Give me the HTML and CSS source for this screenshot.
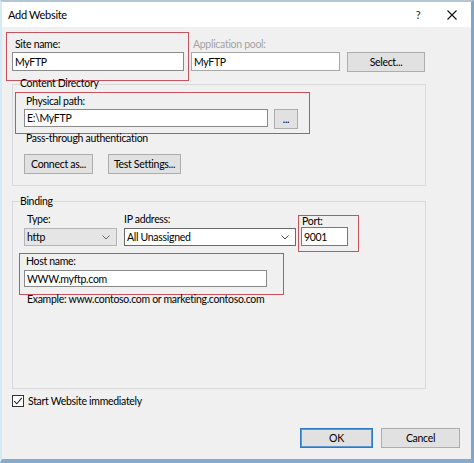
FILE: index.html
```html
<!DOCTYPE html>
<html>
<head>
<meta charset="utf-8">
<link rel="stylesheet" href="styles.css">
</head>
<body>
<div class="window">
  <div class="titlebar">
    <span class="title">Add Website</span>
    <span class="help">?</span>
    <svg class="close" width="10" height="10" viewBox="0 0 10 10"><path d="M0.5 0.5 L9.5 9.5 M9.5 0.5 L0.5 9.5" stroke="#111" stroke-width="1.1" fill="none"/></svg>
  </div>
  <div class="content">
    <div class="row-top">
      <div class="annot site-box">
        <div class="lbl">Site name:</div>
        <div class="field site-field">MyFTP</div>
      </div>
      <div class="pool-col">
        <div class="lbl disabled">Application pool:</div>
        <div class="field pool-field">MyFTP</div>
      </div>
      <div class="btn select-btn">Select...</div>
    </div>

    <div class="group content-group">
      <div class="legend">Content Directory</div>
      <div class="annot path-box">
        <div class="lbl">Physical path:</div>
        <div class="path-row">
          <div class="field path-field">E:\MyFTP</div>
          <div class="btn dots-btn">...</div>
        </div>
      </div>
      <div class="pass-lbl">Pass-through authentication</div>
      <div class="btn-row">
        <div class="btn connect-btn">Connect as...</div>
        <div class="btn test-btn">Test Settings...</div>
      </div>
    </div>

    <div class="group binding-group">
      <div class="legend">Binding</div>
      <div class="bind-row">
        <div class="type-col">
          <div class="lbl type-lbl">Type:</div>
          <div class="combo type-combo"><span>http</span><svg width="8" height="5" viewBox="0 0 8 5"><path d="M0.5 0.5 L4 4 L7.5 0.5" stroke="#666" fill="none"/></svg></div>
        </div>
        <div class="ip-col">
          <div class="lbl">IP address:</div>
          <div class="combo ip-combo"><span>All Unassigned</span><svg width="8" height="5" viewBox="0 0 8 5"><path d="M0.5 0.5 L4 4 L7.5 0.5" stroke="#444" fill="none"/></svg></div>
        </div>
        <div class="annot port-box">
          <div class="lbl port-lbl">Port:</div>
          <div class="field port-field">9001</div>
        </div>
      </div>
      <div class="annot host-box">
        <div class="lbl host-lbl">Host name:</div>
        <div class="field host-field">WWW.myftp.com</div>
      </div>
      <div class="example">Example: www.contoso.com or marketing.contoso.com</div>
    </div>

    <div class="check-row">
      <span class="checkbox"><svg width="10" height="10" viewBox="0 0 10 10"><path d="M1.2 5.2 L3.8 7.8 L8.8 1.8" stroke="#222" stroke-width="1.1" fill="none"/></svg></span>
      <span class="check-lbl">Start Website immediately</span>
    </div>

    <div class="footer">
      <div class="btn ok-btn">OK</div>
      <div class="btn cancel-btn">Cancel</div>
    </div>
  </div>
</div>
</body>
</html>
```
FILE: styles.css
```css
* { box-sizing: border-box; }
html, body { margin: 0; padding: 0; background: #f0f0f0; }
body {
  font-family: "Lato", "Liberation Sans", sans-serif;
  font-size: 10.5px;
  letter-spacing: -0.3px;
  color: #000;
}
.window {
  width: 474px;
  height: 463px;
  background: #f0f0f0;
  border-top: 2px solid #b4c6d6;
  border-left: 2px solid #d3ebf7;
  border-right: 3px solid #7ea6ca;
  border-bottom: 4px solid #86abcd;
  overflow: hidden;
}
.titlebar {
  height: 25px;
  background: #ffffff;
  display: flex;
  align-items: center;
}
.title { flex: 1; padding-left: 6px; font-size: 11px; color: #000; }
.help { width: 12px; text-align: center; margin-right: 23px; font-size: 11px; color: #222; }
.close { display: block; margin-right: 14px; }

.content { padding-top: 5px; }
.lbl { line-height: 16px; white-space: nowrap; }
.disabled { color: #a3a3a3; }
.annot { border: 1px solid #c6525e; }
.field {
  background: #fff;
  border: 1px solid #8a8a8a;
  padding-left: 2px;
  display: flex;
  align-items: center;
  white-space: nowrap;
}
.btn {
  background: #e1e1e1;
  border: 1px solid #adadad;
  display: flex;
  align-items: center;
  justify-content: center;
  white-space: nowrap;
}

.row-top { display: flex; align-items: flex-start; }
.site-box { margin-left: 4px; width: 183px; height: 49px; padding: 3px 0 0 5px; }
.site-box .lbl { padding-left: 3px; }
.site-field { width: 172px; height: 19px; }
.pool-col { margin-left: 2px; padding-top: 4px; }
.pool-col .lbl { padding-left: 2px; }
.pool-field { width: 149px; height: 19px; border-color: #a8a8a8; }
.select-btn { margin-left: 7px; margin-top: 20px; width: 78px; height: 20px; }

.group { border: 1px solid #d9d9d9; margin-left: 10px; width: 414px; }
.legend {
  width: fit-content;
  background: #f0f0f0;
  line-height: 14px;
  margin-left: 7px;
}
.content-group { margin-top: 3px; height: 102px; }
.content-group .legend { margin-top: -9px; }
.path-box { margin: 2px 0 0 2px; width: 295px; height: 42px; padding-left: 8px; }
.path-box .lbl { padding-left: 2px; }
.path-row { display: flex; align-items: flex-start; }
.path-field { width: 244px; height: 18px; }
.dots-btn { margin-left: 6px; width: 24px; height: 20px; }
.pass-lbl { line-height: 14px; margin: -3px 0 0 13px; }
.btn-row { display: flex; margin: 9px 0 0 11px; gap: 15px; }
.connect-btn { width: 69px; height: 20px; }
.test-btn { width: 73px; height: 20px; }

.binding-group { margin-top: 15px; height: 188px; }
.binding-group .legend { margin-top: -8px; }
.bind-row { display: flex; align-items: flex-start; margin-top: 3px; }
.type-col { margin-left: 11px; }
.type-lbl { padding-left: 3px; }
.combo {
  margin-top: 1px;
  height: 18px;
  display: flex;
  align-items: center;
  justify-content: space-between;
  padding: 0 6px 0 2px;
  white-space: nowrap;
}
.combo svg { display: block; }
.type-combo { width: 93px; background: #e5e5e5; border: 1px solid #b4b4b4; }
.ip-col { margin-left: 7px; }
.ip-combo { width: 172px; background: #fff; border: 1px solid #6a6a6a; }
.port-box { margin: 4px 0 0 2px; width: 61px; height: 37px; padding-left: 2px; }
.port-lbl { line-height: 11px; padding-left: 1px; }
.port-field { width: 47px; height: 19px; border-color: #3e86c8; }
.host-box { margin: 1px 0 0 6px; width: 265px; height: 42px; padding-left: 4px; }
.host-lbl { line-height: 14px; padding-left: 2px; }
.host-field { margin-top: 2px; width: 243px; height: 17px; }
.example { line-height: 14px; margin: -3px 0 0 14px; white-space: nowrap; }

.check-row { display: flex; align-items: center; margin: 5px 0 0 10px; line-height: 14px; }
.checkbox {
  width: 12px;
  height: 12px;
  border: 1px solid #333;
  background: #fff;
  display: flex;
  align-items: center;
  justify-content: center;
}
.checkbox svg { display: block; }
.check-lbl { margin-left: 4px; }

.footer { display: flex; justify-content: flex-end; gap: 8px; margin: 20px 11px 0 0; }
.ok-btn { width: 73px; height: 20px; border: 1px solid #2b7bc4; box-shadow: inset 0 0 0 1px #5b9bd5; }
.cancel-btn { width: 79px; height: 20px; }
```
